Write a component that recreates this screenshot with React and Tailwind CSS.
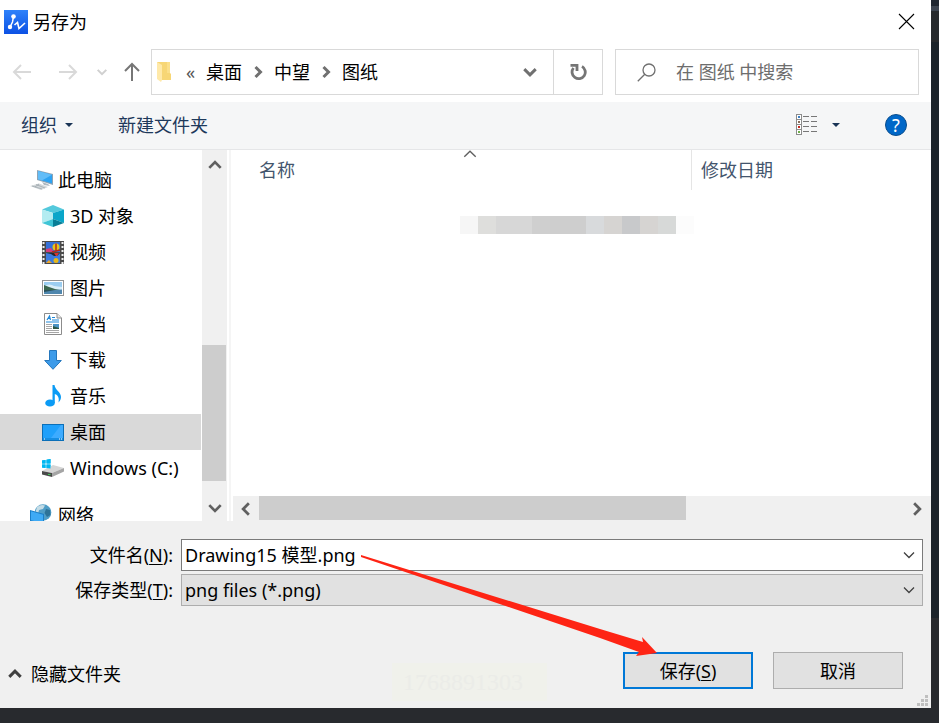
import React, { useState } from 'react';

const tree = [
  { name: '3D 对象', Icon: CubeIcon },
  { name: '视频', Icon: VideoIcon },
  { name: '图片', Icon: PictureIcon },
  { name: '文档', Icon: DocIcon },
  { name: '下载', Icon: DownloadIcon },
  { name: '音乐', Icon: MusicIcon },
  { name: '桌面', Icon: DesktopIcon },
  { name: 'Windows (C:)', Icon: DriveIcon },
];

function Chevron({ className, dir = 'down', size = 14, stroke = 2, color = '#606060' }) {
  const paths = {
    down: 'M2 4.5 L7 9.5 L12 4.5',
    up: 'M2 9.5 L7 4.5 L12 9.5',
    left: 'M9.5 2 L4.5 7 L9.5 12',
    right: 'M4.5 2 L9.5 7 L4.5 12',
  };
  return (
    <svg className={className} width={size} height={size} viewBox="0 0 14 14" fill="none" stroke={color} strokeWidth={stroke}>
      <path d={paths[dir]} />
    </svg>
  );
}

function AppLogo() {
  return (
    <svg width="24" height="24" viewBox="0 0 24 24">
      <defs>
        <linearGradient id="logo" x1="0" y1="0" x2="0" y2="1">
          <stop offset="0" stopColor="#2f82fa" />
          <stop offset="1" stopColor="#0c51e4" />
        </linearGradient>
      </defs>
      <rect width="24" height="24" fill="url(#logo)" />
      <path d="M9.500 6.500 L8.500 12 L6 17" stroke="#fff" strokeWidth="1.5" fill="none" />
      <circle cx="9.500" cy="6.500" r="2.3" fill="#fff" />
      <circle cx="6" cy="17" r="2.2" fill="#fff" />
      <path d="M10.500 15 L13.500 12.500 L15 18.500 L21 13" stroke="#fff" strokeWidth="1.6" fill="none" />
    </svg>
  );
}

function FolderIcon() {
  return (
    <svg width="15" height="22" viewBox="0 0 15 22">
      <path d="M0 1 L13 1 L13 12 L14 13 L14 19 L4 19 Z" fill="#f7d675" />
      <path d="M10 1 H13 V12 H10 Z" fill="#fbdf8a" />
      <path d="M0 1 L5 4 L5 19 L4 21 L0 18 Z" fill="#ffe9a9" />
    </svg>
  );
}

function PcIcon() {
  return (
    <svg width="24" height="22" viewBox="0 0 24 22">
      <path d="M7 1 L23 5 L23 16 L7 11 Z" fill="#8fa3b3" />
      <path d="M8 2 L22 5.800 L22 14.500 L8 10.200 Z" fill="#2ea3f2" />
      <path d="M8 2 L22 5.800 L12 11.400 L8 10.200 Z" fill="#62bdf8" />
      <path d="M12 13 L18 15 L20 17 L14 16 Z" fill="#aeb8c0" />
      <path d="M0 17 L9 14.500 L18 18 L11 21 Z" fill="#d2d7da" />
      <path d="M2 17 L12 20 M6 15.500 L15 19 M9 15 L5 18" stroke="#9aa3a9" strokeWidth="0.7" />
    </svg>
  );
}

function CubeIcon() {
  return (
    <svg width="22" height="22" viewBox="0 0 22 22">
      <path d="M0 4.500 L11 0 L22 4.500 L11 8 Z" fill="#54c9dc" />
      <path d="M0 4.500 L11 8 L11 14 L0 18 Z" fill="#b3ecf1" />
      <path d="M22 4.500 L11 8 L11 14 L22 18 Z" fill="#0aa6c9" />
      <path d="M0 18 L11 14 L11 22 Z" fill="#3fc5d6" />
      <path d="M22 18 L11 14 L11 22 Z" fill="#087e96" />
    </svg>
  );
}

function VideoIcon() {
  return (
    <svg width="22" height="23" viewBox="0 0 22 23">
      <rect width="22" height="23" fill="#4a4a4a" />
      <rect x="4" y="1" width="14" height="10" fill="#3470d8" />
      <rect x="4" y="12" width="14" height="10" fill="#3d7ce0" />
      <path d="M4 8 L9 7 L12 11 H4 Z" fill="#d53b7b" />
      <circle cx="14" cy="6" r="3.5" fill="#e7c419" />
      <path d="M14 2.500 V9.500 M10 11 L18 9" stroke="#b22b1c" strokeWidth="1.5" />
      <path d="M4 12 H18 L15 15 H12 L9 13 Z" fill="#222b30" />
      <path d="M12 12 H17 L15 15 H14 Z" fill="#d8342b" />
      <circle cx="14" cy="19.500" r="2.500" fill="#e7b819" />
      <path d="M4 22 L7 19 L10 22 Z" fill="#efa628" />
      <path d="M1.500 1 V23 M20.500 1 V23" stroke="#eee" strokeWidth="2" strokeDasharray="2 2" />
    </svg>
  );
}

function PictureIcon() {
  return (
    <svg width="22" height="16" viewBox="0 0 22 16">
      <rect x="0.500" y="0.500" width="21" height="15" fill="#fff" stroke="#949494" />
      <rect x="2" y="2" width="18" height="12" fill="#9bcdf0" />
      <path d="M2 6 Q8 3 12 6 L20 7 V10 H2 Z" fill="#d9eef8" />
      <path d="M2 5 L7 7 L13 9 L18 10 L2 11 Z" fill="#3b664e" />
      <path d="M2 10.500 L20 9.500 V14 H2 Z" fill="#4f87ae" />
      <path d="M2 10 H13 L2 12 Z" fill="#29515a" />
    </svg>
  );
}

function DocIcon() {
  return (
    <svg width="18" height="22" viewBox="0 0 18 22">
      <path d="M0.500 0.500 H13 L17.500 5 V21.500 H0.500 Z" fill="#fff" stroke="#8c8c8c" />
      <path d="M13 0.500 V5 H17.500" fill="#e8e8e8" stroke="#8c8c8c" />
      <path d="M3 7 L5.500 3 L6.500 7 M4 5.500 H6" stroke="#1e88d8" strokeWidth="1.200" fill="none" />
      <path d="M8 4.500 H11 M8 7 H15 M2 9 H15" stroke="#1e88d8" />
      <path d="M2 11.500 H8 M2 13.500 H8 M2 15.500 H8 M2 17.500 H15 M2 19.500 H15" stroke="#a6a6a6" />
      <rect x="9" y="11" width="6" height="5" fill="#4b93c5" />
      <path d="M9 13 L15 15 V16 H9 Z" fill="#2c5845" />
    </svg>
  );
}

function DownloadIcon() {
  return (
    <svg width="18" height="20" viewBox="0 0 18 20">
      <path d="M5.500 0.500 H12.500 V10.500 H17.300 L9 19.300 L0.700 10.500 H5.500 Z" fill="#3d9be9" stroke="#2577bd" />
    </svg>
  );
}

function MusicIcon() {
  return (
    <svg width="17" height="22" viewBox="0 0 17 22">
      <ellipse cx="5" cy="18" rx="4.800" ry="3.600" fill="#0a9bf5" />
      <path d="M7.500 0 H9.500 C10 5 16 7 16 12 C16 14 15 16 13.500 17.500 C14.500 13 13 10 9.800 9 V18 H7.500 Z" fill="#0a9bf5" />
    </svg>
  );
}

function DesktopIcon() {
  return (
    <svg width="22" height="17" viewBox="0 0 22 17">
      <rect x="0.500" y="0.500" width="21" height="16" fill="#1fa0fb" stroke="#0b6fb8" />
      <path d="M21 1 V14 H9 L19 1 Z" fill="#3dabff" />
      <path d="M1 15 H21" stroke="#0f7ccb" />
      <path d="M2 15 H3 M17 15 H18 M19 15 H20" stroke="#fff" />
    </svg>
  );
}

function DriveIcon() {
  return (
    <svg width="22" height="18" viewBox="0 0 22 18">
      <path d="M0 1.500 L3.500 1 V4.500 H0 Z M4.500 0.800 L8.500 0 V4.500 H4.500 Z M0 5.500 H3.500 V9 L0 8.500 Z M4.500 5.500 H8.500 V10 L4.500 9.300 Z" fill="#00b7f1" />
      <path d="M0 12 L11 6 L22 9 L10 14 Z" fill="#d5d5d5" />
      <path d="M0 12 L10 14 V18 L0 15.500 Z" fill="#4a4a4a" />
      <path d="M10 14 L22 9 V12.500 L10 18 Z" fill="#a5a5a5" />
      <path d="M0 1.500 L3.500 1 V4.500 H0 Z M4.500 0.800 L8.500 0 V4.500 H4.500 Z M0 5.500 H3.500 V9 L0 8.500 Z M4.500 5.500 H8.500 V9.500 L4.500 9 Z" fill="#00b7f1" />
      <path d="M6 15.500 H8.500" stroke="#44d05b" />
    </svg>
  );
}

function NetworkIcon() {
  return (
    <svg width="22" height="22" viewBox="0 0 22 22">
      <circle cx="13" cy="8.500" r="8.300" fill="#4f9dc6" />
      <path d="M7 3 Q11 0 15 1.500 L13 5 L9 6 L8 10 L5.500 8 Z" fill="#c4dce6" />
      <path d="M16 5 L20 6 L20.500 11 L17 13 L14.500 9 Z" fill="#2d7398" />
      <path d="M0 6 L14 10 V20 L0 17 Z" fill="#1b7fc8" />
      <path d="M1 7.300 L13 10.700 V19 L1 16.300 Z" fill="#3eaaf5" />
    </svg>
  );
}

function NavArrow({ dir, color }) {
  const d = { left: 'M19 10 H2 M9 3 L2 10 L9 17', right: 'M1 10 H18 M11 3 L18 10 L11 17', up: 'M10 19 V2 M3 9 L10 2 L17 9' };
  return (
    <svg width="20" height="20" viewBox="0 0 20 20" fill="none" stroke={color} strokeWidth="2">
      <path d={d[dir]} />
    </svg>
  );
}

function ViewIcon() {
  const dots = ['#3a7fc4', '#8a6d5a', '#c8261c', '#6fae4a'];
  return (
    <svg width="22" height="21" viewBox="0 0 22 21">
      {dots.map((c, i) => (
        <g key={c}>
          <rect x="0.500" y={0.5 + i * 5} width="5" height="5" fill="#fff" stroke="#8c8c8c" />
          <rect x="2" y={2 + i * 5} width="2" height="2" fill={c} />
          <path d={`M7 ${2.5 + i * 5} H13 M15 ${2.5 + i * 5} H21`} stroke="#777" />
        </g>
      ))}
    </svg>
  );
}

function Caret() {
  return (
    <svg width="8" height="4" viewBox="0 0 8 4">
      <path d="M0 0 H8 L4 4 Z" fill="#1a3456" />
    </svg>
  );
}

function TitleBar() {
  return (
    <header className="flex h-[43px] items-center gap-[5px] pl-1 pr-4">
      <AppLogo />
      <h1>另存为</h1>
      <button aria-label="关闭" className="ml-auto">
        <svg width="17" height="17" viewBox="0 0 17 17" stroke="#000" strokeWidth="1.1">
          <path d="M1 1 L16 16 M16 1 L1 16" />
        </svg>
      </button>
    </header>
  );
}

function NavRow() {
  return (
    <div className="flex items-center pt-[6px] pb-[7px] pl-3 pr-3">
      <nav className="flex w-[139px] shrink-0 items-center">
        <button aria-label="后退"><NavArrow dir="left" color="#d9d9d9" /></button>
        <button aria-label="前进" className="ml-[26px]"><NavArrow dir="right" color="#d9d9d9" /></button>
        <button aria-label="历史" className="ml-[18px]"><Chevron size={12} stroke={2.4} color="#d0d0d0" /></button>
        <button aria-label="向上" className="ml-[14px]"><NavArrow dir="up" color="#767676" /></button>
      </nav>
      <div className="flex h-[46px] min-w-0 flex-1 border border-[#d9d9d9]">
        <div className="flex flex-1 items-center pl-[5px]">
          <FolderIcon />
          <span className="ml-[14px] w-5 text-[#555]">«</span>
          <button>桌面</button>
          <Chevron dir="right" stroke={3} color="#707070" size={14} className="mx-[9px]" />
          <button>中望</button>
          <Chevron dir="right" stroke={3} color="#707070" size={14} className="mx-[9px]" />
          <button>图纸</button>
          <button aria-label="展开" className="ml-auto mr-[15px]"><Chevron stroke={2.6} size={16} color="#707070" /></button>
        </div>
        <button aria-label="刷新" className="flex w-[49px] items-center justify-center border-l border-[#d9d9d9]">
          <svg width="18" height="18" viewBox="0 0 18 18" fill="none" stroke="#757575" strokeWidth="2.800">
            <path d="M13 3.400 A6.600 6.600 0 1 1 4.500 5" />
            <path d="M1.500 2.300 H8 V8" />
          </svg>
        </button>
      </div>
      <label className="ml-3 flex h-[46px] w-[304px] items-center gap-5 border border-[#d9d9d9] pl-[21px]">
        <svg width="19" height="19" viewBox="0 0 19 19" fill="none" stroke="#707070" strokeWidth="1.300">
          <circle cx="12" cy="7" r="6" />
          <path d="M7.800 11.200 L0.800 18.200" />
        </svg>
        <input aria-label="搜索" placeholder="在 图纸 中搜索" className="min-w-0 flex-1 outline-none placeholder:text-[#6d6d6d]" />
      </label>
    </div>
  );
}

function Toolbar() {
  return (
    <div className="flex h-12 items-center border-b border-[#e5e6e8] bg-[#f5f6f7] pb-[2px] pl-[21px] pr-6 text-[#1e395b]">
      <button className="flex items-center gap-2">组织<Caret /></button>
      <button className="ml-[45px]">新建文件夹</button>
      <button aria-label="视图" className="ml-auto flex items-center gap-[14px]"><ViewIcon /><Caret /></button>
      <button aria-label="帮助" className="ml-[45px] flex size-[22px] items-center justify-center rounded-full border border-[#0a4d8c] bg-[#0067c8] text-white">?</button>
    </div>
  );
}

function Sidebar() {
  const [active, setActive] = useState('桌面');
  return (
    <aside className="flex w-[227px] shrink-0">
      <div className="flex-1 overflow-hidden pt-3">
        <button className="flex h-9 w-full items-center gap-1 pl-[30px]"><PcIcon />此电脑</button>
        {tree.map(({ name, Icon }) => (
          <button
            key={name}
            onClick={() => setActive(name)}
            className={`flex h-9 w-full items-center gap-[6px] pl-[42px] whitespace-nowrap ${active === name ? 'bg-[#d9d9d9]' : ''}`}
          >
            <span className="flex w-[22px] justify-center"><Icon /></span>
            {name}
          </button>
        ))}
        <button className="mt-[11px] flex h-9 w-full items-center gap-[6px] pl-[30px]"><NetworkIcon />网络</button>
      </div>
      {/* vertical scrollbar */}
      <div className="ml-px flex w-[25px] flex-col items-center bg-[#f0f0f0] pt-[7px] pb-[5px]">
        <Chevron dir="up" size={16} stroke={2.4} />
        <div className="mt-[172px] mr-px w-6 flex-1 bg-[#cdcdcd]" />
        <Chevron size={16} stroke={2.4} className="mt-[19px]" />
      </div>
    </aside>
  );
}

const mosaic = [
  'bg-[#f6f6f6]', 'bg-[#dededc]', 'bg-[#d7d7d7]', 'bg-[#d7d7d7]', 'bg-[#cfcfcf]', 'bg-[#cecece]', 'bg-[#cecece]',
  'bg-[#d8dadc]', 'bg-[#d6d4d2]', 'bg-[#c8c9cb]', 'bg-[#d6d4d2]', 'bg-[#d7d9d8]', 'bg-[#fcfcfc]',
];

function FileList() {
  return (
    <main className="ml-[2px] flex min-w-0 flex-1 flex-col border-l-2 border-[#f5f5f5] pl-[2px]">
      <div className="flex h-10 text-[#43556d]">
        <button className="relative flex w-[459px] items-center border-r border-[#e5e5e5] pl-[26px]">
          名称
          <Chevron dir="up" size={16} stroke={1.2} className="absolute top-[-4px] left-1/2" />
        </button>
        <button className="pl-[9px]">修改日期</button>
      </div>
      <div className="ml-[227px] mt-[26px] flex">
        {mosaic.map((c, i) => <span key={i} className={`size-[18px] ${c}`} />)}
      </div>
      {/* horizontal scrollbar */}
      <div className="mt-auto flex h-[25px] items-center bg-[#f0f0f0] pl-[5px] pr-[6px]">
        <Chevron dir="left" size={16} stroke={2.4} />
        <div className="mb-px ml-[5px] h-6 w-[427px] bg-[#cdcdcd]" />
        <Chevron dir="right" size={16} stroke={2.4} className="ml-auto" />
      </div>
    </main>
  );
}

function Footer() {
  return (
    <footer className="relative bg-[#f0f0f0] pt-[18px] pb-[19px]">
      <span className="absolute bottom-[7px] left-[392px] bg-[#f0f1eb] py-[7px] pr-6 pl-[11px] text-2xl leading-6 text-[#ebece8] [font-family:'Liberation_Serif',serif]">1768891303</span>
      <div className="grid grid-cols-[173px_1fr] items-center gap-x-2 gap-y-[3px] pr-2">
        <label htmlFor="file" className="text-right">文件名(<u className="underline-offset-2">N</u>):</label>
        <div className="flex h-8 items-center border border-[#7a7a7a] bg-white pr-[6px]">
          <input id="file" defaultValue="Drawing15 模型.png" className="h-full min-w-0 flex-1 pb-[2px] pl-[3px] outline-none" />
          <button aria-label="文件名列表"><Chevron stroke={1.3} color="#404040" /></button>
        </div>
        <label htmlFor="type" className="text-right">保存类型(<u className="underline-offset-2">T</u>):</label>
        <div className="relative">
          <select id="type" className="block h-8 w-full appearance-none border border-[#adadad] bg-[#e1e1e1] pl-[3px] outline-none">
            <option>png files (*.png)</option>
          </select>
          <Chevron stroke={1.3} color="#404040" className="pointer-events-none absolute top-[9px] right-[7px]" />
        </div>
      </div>
      <div className="mt-[46px] flex items-center gap-5 pl-[7px] pr-7">
        <button className="mr-auto mt-[6px] flex items-center gap-2"><Chevron dir="up" size={16} stroke={2.6} color="#404040" />隐藏文件夹</button>
        <button className="h-[37px] w-[130px] border-2 border-[#0078d7] bg-[#e1e1e1]">保存(<u className="underline-offset-2">S</u>)</button>
        <button className="h-[37px] w-[130px] border border-[#adadad] bg-[#e1e1e1]">取消</button>
      </div>
    </footer>
  );
}

export default function App() {
  return (
    <div className="h-screen bg-[linear-gradient(#1f2630_6px,#3c4450_6px,#3c4450_11px,#26292c_11px,#26292c_42px,#1b232a_42px,#1b232a_calc(100%-105px),#282a2e_calc(100%-105px))] pr-2 pb-[15px] text-lg leading-6 text-black [font-family:'Noto_Sans','Noto_Sans_CJK_SC',sans-serif]">
      <div className="relative flex h-full flex-col bg-white">
        <TitleBar />
        <NavRow />
        <Toolbar />
        <div className="flex min-h-0 flex-1">
          <Sidebar />
          <FileList />
        </div>
        <Footer />

        {/* resize grip */}
        <svg className="absolute right-[3px] bottom-[2px]" width="11" height="11" fill="#bfbfbf">
          <path d="M8 0h3v3h-3z M4 4h3v3h-3z M8 4h3v3h-3z M0 8h3v3h-3z M4 8h3v3h-3z M8 8h3v3h-3z" />
        </svg>

        {/* red pointer from the file name to the save button */}
        <svg className="pointer-events-none absolute right-[273px] bottom-[51px]" width="298" height="104" viewBox="360 553 298 104">
          <path d="M361 555 L600 629 L643 642 L642 637 L657 653 L636 656 L639 652 L600 638 L361 557 Z" fill="#fe2414" />
        </svg>
      </div>
    </div>
  );
}
